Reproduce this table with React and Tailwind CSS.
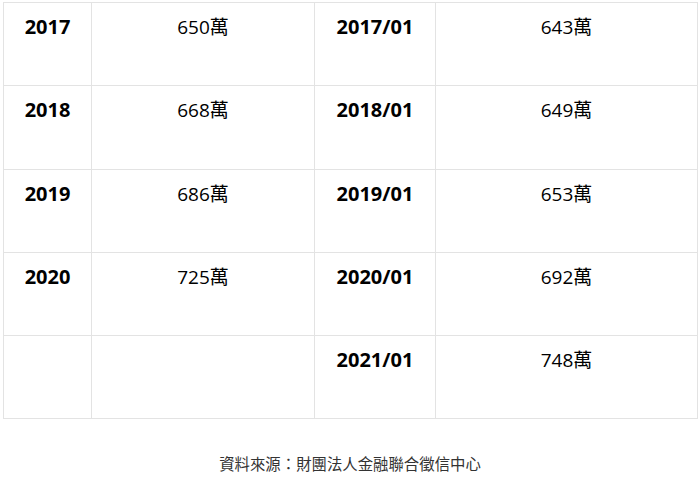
import React from 'react';

const rows = [
  { year: '2017', total: '650萬', month: '2017/01', count: '643萬' },
  { year: '2018', total: '668萬', month: '2018/01', count: '649萬' },
  { year: '2019', total: '686萬', month: '2019/01', count: '653萬' },
  { year: '2020', total: '725萬', month: '2020/01', count: '692萬' },
  { year: '', total: '', month: '2021/01', count: '748萬' },
];

export default function App() {
  return (
    <div className="bg-white w-[700px] h-[502px] overflow-hidden pt-[2px] pl-[3px] pr-[3px] text-black" style={{ fontFamily: '"Open Sans", "Noto Sans CJK TC", sans-serif' }}>
      <table className="w-[694px] border-collapse border border-[#dedede] table-fixed">
        <colgroup>
          <col className="w-[88px]" />
          <col className="w-[223px]" />
          <col className="w-[121px]" />
          <col className="w-[262px]" />
        </colgroup>
        <tbody>
          {rows.map((r, i) => (
            <tr key={i} className="h-[83.3px]">
              <td className="border border-[#e3e3e3] align-top text-center pt-[9px] text-[20px] leading-[30px] font-bold">{r.year}</td>
              <td className="border border-[#e3e3e3] align-top text-center pt-[9px] text-[19px] leading-[30px]">{r.total}</td>
              <td className="border border-[#e3e3e3] align-top text-center pt-[9px] text-[20px] leading-[30px] font-bold">{r.month}</td>
              <td className="border border-[#e3e3e3] align-top text-center pt-[9px] text-[19px] leading-[30px]">{r.count}</td>
            </tr>
          ))}
        </tbody>
      </table>
      <p className="mt-[35px] text-center text-[15.4px] leading-[22px] text-[#333]">資料來源：財團法人金融聯合徵信中心</p>
    </div>
  );
}
